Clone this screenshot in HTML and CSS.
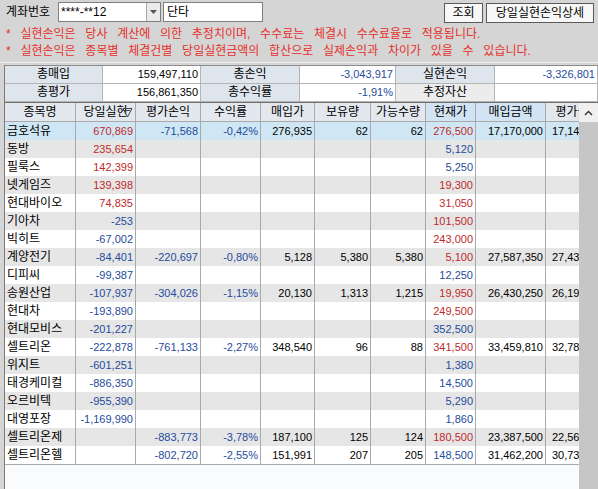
FILE: index.html
```html
<!DOCTYPE html>
<html lang="ko">
<head>
<meta charset="utf-8">
<title>당일실현손익</title>
<link rel="stylesheet" href="styles.css">
</head>
<body>
<div class="top">
  <span class="lbl">계좌번호</span>
  <div class="combo">
    <span class="combo-text">****-**12</span>
    <span class="combo-btn"><svg width="9" height="6" viewBox="0 0 9 6"><path d="M1 1h7L4.5 5z" fill="#555"/></svg></span>
  </div>
  <div class="field">단타</div>
  <div class="spacer"></div>
  <button class="btn btn-query">조회</button>
  <button class="btn btn-detail">당일실현손익상세</button>
</div>
<div class="notice">
  <p>* 실현손익은 당사 계산에 의한 추정치이며, 수수료는 체결시 수수료율로 적용됩니다.</p>
  <p>* 실현손익은 종목별 체결건별 당일실현금액의 합산으로 실제손익과 차이가 있을 수 있습니다.</p>
</div>
<div class="panel">
  <div class="summary">
    <div class="s-lbl">총매입</div><div class="s-val">159,497,110</div>
    <div class="s-lbl">총손익</div><div class="s-val blue">-3,043,917</div>
    <div class="s-lbl">실현손익</div><div class="s-val blue">-3,326,801</div>
    <div class="s-lbl">총평가</div><div class="s-val">156,861,350</div>
    <div class="s-lbl">총수익률</div><div class="s-val blue">-1,91%</div>
    <div class="s-lbl s-lbl-alt">추정자산</div><div class="s-val"></div>
  </div>
  <div class="grid-area">
    <div class="grid-clip">
      <div class="row head">
        <div class="cell">종목명</div>
        <div class="cell hcell-icon">당일실현<svg class="filter" width="11" height="11" viewBox="0 0 11 11"><path d="M1 1.5h9L5.5 10z" fill="none" stroke="#444" stroke-width="1"/><path d="M3 3.5h5" stroke="#444" stroke-width="1"/></svg></div>
        <div class="cell">평가손익</div>
        <div class="cell">수익률</div>
        <div class="cell">매입가</div>
        <div class="cell">보유량</div>
        <div class="cell">가능수량</div>
        <div class="cell hl">현재가</div>
        <div class="cell hl">매입금액</div>
        <div class="cell">평가금액</div>
      </div>
      <div class="row sel"><div class="cell name">금호석유</div><div class="cell red">670,869</div><div class="cell blue">-71,568</div><div class="cell blue">-0,42%</div><div class="cell">276,935</div><div class="cell">62</div><div class="cell">62</div><div class="cell red">276,500</div><div class="cell">17,170,000</div><div class="cell">17,143,000</div></div>
      <div class="row alt"><div class="cell name">동방</div><div class="cell red">235,654</div><div class="cell"></div><div class="cell"></div><div class="cell"></div><div class="cell"></div><div class="cell"></div><div class="cell blue">5,120</div><div class="cell"></div><div class="cell"></div></div>
      <div class="row"><div class="cell name">필룩스</div><div class="cell red">142,399</div><div class="cell"></div><div class="cell"></div><div class="cell"></div><div class="cell"></div><div class="cell"></div><div class="cell blue">5,250</div><div class="cell"></div><div class="cell"></div></div>
      <div class="row alt"><div class="cell name">넷게임즈</div><div class="cell red">139,398</div><div class="cell"></div><div class="cell"></div><div class="cell"></div><div class="cell"></div><div class="cell"></div><div class="cell red">19,300</div><div class="cell"></div><div class="cell"></div></div>
      <div class="row"><div class="cell name">현대바이오</div><div class="cell red">74,835</div><div class="cell"></div><div class="cell"></div><div class="cell"></div><div class="cell"></div><div class="cell"></div><div class="cell red">31,050</div><div class="cell"></div><div class="cell"></div></div>
      <div class="row alt"><div class="cell name">기아차</div><div class="cell blue">-253</div><div class="cell"></div><div class="cell"></div><div class="cell"></div><div class="cell"></div><div class="cell"></div><div class="cell red">101,500</div><div class="cell"></div><div class="cell"></div></div>
      <div class="row"><div class="cell name">빅히트</div><div class="cell blue">-67,002</div><div class="cell"></div><div class="cell"></div><div class="cell"></div><div class="cell"></div><div class="cell"></div><div class="cell red">243,000</div><div class="cell"></div><div class="cell"></div></div>
      <div class="row alt"><div class="cell name">계양전기</div><div class="cell blue">-84,401</div><div class="cell blue">-220,697</div><div class="cell blue">-0,80%</div><div class="cell">5,128</div><div class="cell">5,380</div><div class="cell">5,380</div><div class="cell red">5,100</div><div class="cell">27,587,350</div><div class="cell">27,438,000</div></div>
      <div class="row"><div class="cell name">디피씨</div><div class="cell blue">-99,387</div><div class="cell"></div><div class="cell"></div><div class="cell"></div><div class="cell"></div><div class="cell"></div><div class="cell blue">12,250</div><div class="cell"></div><div class="cell"></div></div>
      <div class="row alt"><div class="cell name">송원산업</div><div class="cell blue">-107,937</div><div class="cell blue">-304,026</div><div class="cell blue">-1,15%</div><div class="cell">20,130</div><div class="cell">1,313</div><div class="cell">1,215</div><div class="cell red">19,950</div><div class="cell">26,430,250</div><div class="cell">26,194,350</div></div>
      <div class="row"><div class="cell name">현대차</div><div class="cell blue">-193,890</div><div class="cell"></div><div class="cell"></div><div class="cell"></div><div class="cell"></div><div class="cell"></div><div class="cell red">249,500</div><div class="cell"></div><div class="cell"></div></div>
      <div class="row alt"><div class="cell name">현대모비스</div><div class="cell blue">-201,227</div><div class="cell"></div><div class="cell"></div><div class="cell"></div><div class="cell"></div><div class="cell"></div><div class="cell blue">352,500</div><div class="cell"></div><div class="cell"></div></div>
      <div class="row"><div class="cell name">셀트리온</div><div class="cell blue">-222,878</div><div class="cell blue">-761,133</div><div class="cell blue">-2,27%</div><div class="cell">348,540</div><div class="cell">96</div><div class="cell">88</div><div class="cell red">341,500</div><div class="cell">33,459,810</div><div class="cell">32,784,000</div></div>
      <div class="row alt"><div class="cell name">위지트</div><div class="cell blue">-601,251</div><div class="cell"></div><div class="cell"></div><div class="cell"></div><div class="cell"></div><div class="cell"></div><div class="cell blue">1,380</div><div class="cell"></div><div class="cell"></div></div>
      <div class="row"><div class="cell name">태경케미컬</div><div class="cell blue">-886,350</div><div class="cell"></div><div class="cell"></div><div class="cell"></div><div class="cell"></div><div class="cell"></div><div class="cell blue">14,500</div><div class="cell"></div><div class="cell"></div></div>
      <div class="row alt"><div class="cell name">오르비텍</div><div class="cell blue">-955,390</div><div class="cell"></div><div class="cell"></div><div class="cell"></div><div class="cell"></div><div class="cell"></div><div class="cell blue">5,290</div><div class="cell"></div><div class="cell"></div></div>
      <div class="row"><div class="cell name">대영포장</div><div class="cell blue">-1,169,990</div><div class="cell"></div><div class="cell"></div><div class="cell"></div><div class="cell"></div><div class="cell"></div><div class="cell blue">1,860</div><div class="cell"></div><div class="cell"></div></div>
      <div class="row alt"><div class="cell name">셀트리온제</div><div class="cell"></div><div class="cell blue">-883,773</div><div class="cell blue">-3,78%</div><div class="cell">187,100</div><div class="cell">125</div><div class="cell">124</div><div class="cell red">180,500</div><div class="cell">23,387,500</div><div class="cell">22,562,500</div></div>
      <div class="row last"><div class="cell name">셀트리온헬</div><div class="cell"></div><div class="cell blue">-802,720</div><div class="cell blue">-2,55%</div><div class="cell">151,991</div><div class="cell">207</div><div class="cell">205</div><div class="cell blue">148,500</div><div class="cell">31,462,200</div><div class="cell">30,739,500</div></div>
    </div>
    <div class="vscroll">
      <div class="vs-up"><svg width="9" height="6" viewBox="0 0 9 6"><path d="M1 5L4.5 1.5L8 5" fill="none" stroke="#333" stroke-width="1.4"/></svg></div>
      <div class="vs-thumb"></div>
    </div>
  </div>
</div>
</body>
</html>
```
FILE: styles.css
```css
* { box-sizing: border-box; }
html, body { margin: 0; padding: 0; }
body {
  width: 598px;
  height: 489px;
  overflow: hidden;
  background: #d5d5d5;
  font-family: "Liberation Sans", "Noto Sans CJK KR", sans-serif;
  font-size: 12px;
  color: #000;
}
p { margin: 0; }

.top {
  display: flex;
  align-items: flex-start;
  height: 24px;
  padding-top: 2px;
}
.lbl {
  margin-left: 6px;
  width: 52px;
  line-height: 20px;
  font-size: 12px;
}
.combo {
  display: flex;
  width: 103px;
  height: 20px;
  border: 1px solid #7f7f7f;
  background: #fff;
}
.combo-text {
  flex: 1;
  padding-left: 2px;
  line-height: 18px;
}
.combo-btn {
  width: 14px;
  border-left: 1px solid #a8a8a8;
  background: #ebebeb;
  display: flex;
  align-items: center;
  justify-content: center;
}
.field {
  margin-left: 2px;
  width: 100px;
  height: 20px;
  border: 1px solid #7f7f7f;
  background: #fff;
  padding-left: 3px;
  line-height: 18px;
}
.spacer { flex: 1; }
.btn {
  height: 20px;
  margin-top: 1px;
  padding: 0;
  border: 1px solid #5a5a5a;
  background: #f7f7f7;
  font-family: inherit;
  font-size: 12px;
  line-height: 18px;
  color: #000;
}
.btn-query { width: 39px; }
.btn-detail { width: 108px; margin-left: 3px; margin-right: 4px; }

.notice {
  height: 39px;
  padding-top: 2px;
  padding-left: 6px;
  color: #e5302a;
  line-height: 17px;
  word-spacing: 6.4px;
  border-bottom: 1px solid #f0f0f0;
  white-space: nowrap;
}

.panel {
  margin-top: 2px;
  margin-left: 4px;
  border-left: 1px solid #7a7a7a;
  overflow: hidden;
}
.summary {
  display: grid;
  grid-template-columns: 98px 98px 99px 96px 99px 103px;
  border-top: 1px solid #8c8c8c;
}
.summary > div {
  height: 18px;
  line-height: 17px;
  border-right: 1px solid #b4b4b4;
  border-bottom: 1px solid #b4b4b4;
  white-space: nowrap;
  overflow: hidden;
}
.s-lbl {
  background: #dfe5ec;
  text-align: center;
}
.s-lbl-alt { background: #ececec; }
.s-val {
  background: #fff;
  text-align: right;
  padding-right: 2px;
  font-size: 11px;
}

.grid-area {
  display: flex;
  height: 387px;
  border-top: 1px solid #707070;
}
.grid-clip {
  width: 574px;
  overflow: hidden;
  background: #f9fbfd;
}
.row {
  display: grid;
  grid-template-columns: 71px 60px 65px 60px 54px 56px 55px 50px 70px 64px;
  width: 605px;
  height: 18px;
  background: #fff;
}
.row.alt { background: #e6e6e6; }
.row.sel { background: #cfe7f4; }
.row.last { height: 19px; border-bottom: 1px solid #a9a9a9; }
.row.head {
  height: 19px;
  background: #e3e8ee;
  border-bottom: 1px solid #a9a9a9;
}
.cell {
  border-right: 1px solid #a9a9a9;
  padding: 0 2px;
  line-height: 18px;
  white-space: nowrap;
  overflow: hidden;
  text-align: right;
  font-size: 11px;
}
.row.head .cell {
  text-align: center;
  font-size: 12px;
  padding: 0;
}
.row.head .cell.hl { background: #d2e3f3; }
.hcell-icon { position: relative; }
.filter {
  position: absolute;
  right: 2px;
  top: 4px;
}
.cell.name {
  text-align: left;
  font-size: 12px;
  padding-left: 2px;
}
.red { color: #bf2a2a; }
.blue { color: #1f4c9c; }

.vscroll {
  width: 19px;
  display: flex;
  flex-direction: column;
  background: #c6c6c6;
}
.vs-up {
  height: 19px;
  background: #f0f0f0;
  display: flex;
  align-items: center;
  justify-content: center;
}
.vs-thumb {
  flex: 1;
  background: #c6c6c6;
}
```
